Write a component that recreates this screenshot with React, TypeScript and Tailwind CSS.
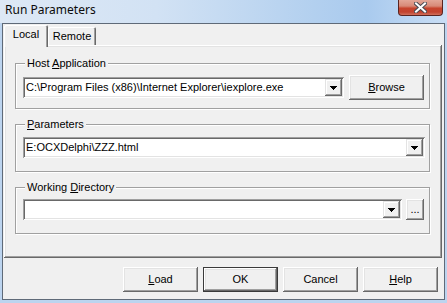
import React from "react";

const raised =
  "bg-[#f0f0f0] shadow-[inset_-1px_-1px_0_#696969,inset_1px_1px_0_#ffffff,inset_-2px_-2px_0_#a0a0a0,inset_2px_2px_0_#e3e3e3]";
const defRaised =
  "bg-[#f0f0f0] border border-[#3a3a3a] shadow-[inset_-1px_-1px_0_#696969,inset_1px_1px_0_#ffffff,inset_-2px_-2px_0_#a0a0a0,inset_2px_2px_0_#e3e3e3]";
const dropRaised =
  "bg-[#f0f0f0] shadow-[inset_-1px_-1px_0_#696969,inset_1px_1px_0_#e3e3e3,inset_-2px_-2px_0_#a0a0a0,inset_2px_2px_0_#ffffff]";
const sunken =
  "bg-white shadow-[inset_1px_1px_0_#a0a0a0,inset_-1px_-1px_0_#ffffff,inset_2px_2px_0_#696969,inset_-2px_-2px_0_#e3e3e3]";

function Arrow() {
  return (
    <svg width="7" height="4" viewBox="0 0 7 4" shapeRendering="crispEdges">
      <path d="M0 0h7v1h-1v1h-1v1h-1v1h-1v-1h-1v-1h-1v-1h-1z" fill="#000" />
    </svg>
  );
}

function Combo({ className, text }: { className: string; text?: string }) {
  return (
    <div className={`h-[21px] flex items-center pl-[3px] pr-[2px] ${sunken} ${className}`}>
      <span className="flex-1 truncate leading-[13px] text-black">{text}</span>
      <div className={`w-[17px] h-[17px] flex items-center justify-center ${dropRaised}`}>
        <Arrow />
      </div>
    </div>
  );
}

function Btn({ children, def, className = "w-[75px] h-[25px]" }: { children: React.ReactNode; def?: boolean; className?: string }) {
  return (
    <div className={`${className} flex items-center justify-center leading-[13px] text-black ${def ? defRaised : raised}`}>
      {children}
    </div>
  );
}

function Group({ label, children, className }: { label: React.ReactNode; children: React.ReactNode; className: string }) {
  return (
    <div className={`relative w-[415px] border border-[#a0a0a0] shadow-[inset_1px_1px_0_#ffffff,1px_1px_0_#ffffff] ${className}`}>
      <span className="absolute left-[9px] -top-[7px] px-[2px] bg-[#f0f0f0] leading-[13px] text-black whitespace-nowrap">
        {label}
      </span>
      {children}
    </div>
  );
}

export default function App() {
  return (
    <div
      className="w-[447px] h-[303px] flex flex-col bg-[#bcd4ef] overflow-hidden"
      style={{ fontFamily: '"Liberation Sans", Arial, sans-serif' }}
    >
      {/* Title bar */}
      <div className="h-[23px] flex items-start bg-[linear-gradient(90deg,#dde8f5_0%,#d2e2f4_35%,#b3d0ef_70%,#a9caee_82%,#c9def5_100%)]">
        <span
          className="pl-[5px] pt-[2px] text-[12px] leading-[16px] text-[#0b0b0b]"
          style={{ fontFamily: '"Noto Sans", "Open Sans", sans-serif' }}
        >
          Run Parameters
        </span>
        <div className="ml-auto mr-[4px] w-[45px] h-[16px] rounded-b-[4px] border border-t-0 border-[#5a2420] bg-[linear-gradient(180deg,#e3a697_0%,#d88a78_40%,#c7442d_55%,#c2432f_80%,#d0705c_100%)] flex items-center justify-center">
          <svg width="13" height="11" viewBox="0 0 13 11">
            <path d="M2 1.5L11 9.5M11 1.5L2 9.5" stroke="#4a4a52" strokeWidth="4" strokeLinecap="square" />
            <path d="M2 1.5L11 9.5M11 1.5L2 9.5" stroke="#ffffff" strokeWidth="2" strokeLinecap="square" />
          </svg>
        </div>
      </div>

      {/* Client area */}
      <div className="mx-[2px] h-[277px] border border-[#5f6a78] bg-[#f0f0f0] flex flex-col text-[11px]">
        {/* Tabs */}
        <div className="h-[21px] flex items-end">
          <div className="ml-[1px] w-[44px] h-[22px] -mb-[2px] relative z-10 bg-[#f0f0f0] rounded-tl-[2px] rounded-tr-[2px] shadow-[inset_1px_1px_0_#ffffff,inset_-1px_0_0_#696969,inset_-2px_0_0_#a0a0a0] flex justify-center pt-[3px] leading-[13px] text-black">
            Local
          </div>
          <div className="w-[48px] h-[18px] bg-[#f0f0f0] rounded-tl-[2px] rounded-tr-[2px] shadow-[inset_1px_1px_0_#ffffff,inset_-1px_0_0_#696969,inset_-2px_0_0_#a0a0a0] flex justify-center pt-[3px] leading-[13px] text-black">
            Remote
          </div>
        </div>

        {/* Page */}
        <div className={`ml-[1px] w-[438px] h-[213px] pt-[18px] pl-[11px] flex flex-col gap-[15px] ${raised}`}>
          <Group
            className="pt-[11px] pl-[7px] pb-[8px]"
            label={
              <>
                Host <span className="underline">A</span>pplication
              </>
            }
          >
            <div className="h-[25px] flex items-center gap-[5px]">
              <Combo className="w-[321px]" text="C:\Program Files (x86)\Internet Explorer\iexplore.exe" />
              <Btn>
                <span className="underline">B</span>rowse
              </Btn>
            </div>
          </Group>

          <Group
            className="pt-[12px] pl-[7px] pb-[13px]"
            label={
              <>
                <span className="underline">P</span>arameters
              </>
            }
          >
            <Combo className="w-[402px]" text="E:OCXDelphi\ZZZ.html" />
          </Group>

          <Group
            className="pt-[11px] pl-[7px] pb-[13px]"
            label={
              <>
                Working <span className="underline">D</span>irectory
              </>
            }
          >
            <div className="flex items-center gap-[4px]">
              <Combo className="w-[379px]" text="" />
              <Btn className="w-[18px] h-[21px]">...</Btn>
            </div>
          </Group>
        </div>

        {/* Buttons */}
        <div className="flex justify-end gap-[5px] pt-[9px] pr-[6px]">
          <Btn>
            <span className="underline">L</span>oad
          </Btn>
          <Btn def>OK</Btn>
          <Btn>Cancel</Btn>
          <Btn>
            <span className="underline">H</span>elp
          </Btn>
        </div>
      </div>
    </div>
  );
}
